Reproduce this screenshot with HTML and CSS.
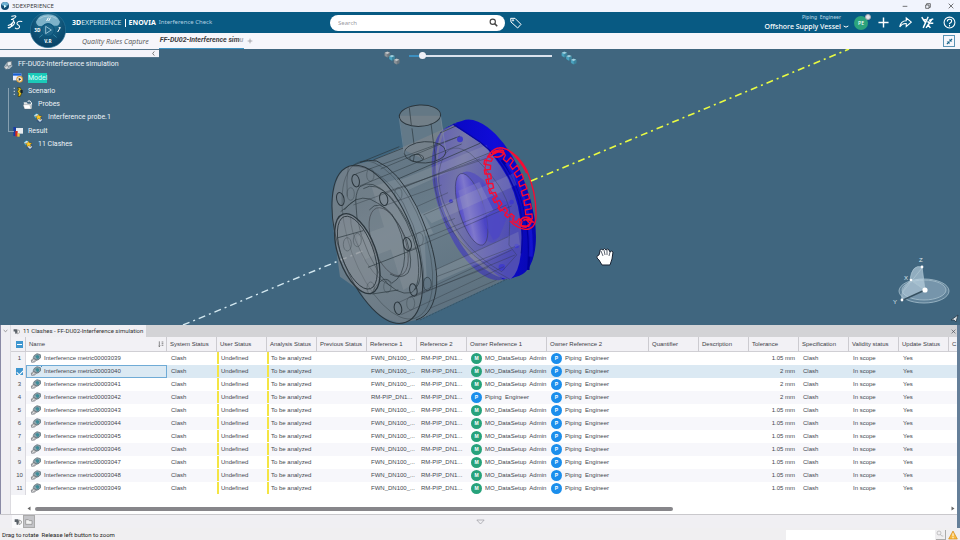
FILE: index.html
```html
<!DOCTYPE html>
<html lang="en">
<head>
<meta charset="utf-8">
<title>3DEXPERIENCE</title>
<link rel="stylesheet" href="styles.css">
</head>
<body>
<svg class="defs" aria-hidden="true">
  <symbol id="metric" viewBox="0 0 33 30">
    <path d="M4 21l13-9 8 6-12 9-8 1z" fill="#e6e8ec" stroke="#63666d" stroke-width="2"/>
    <path d="M12 8l9-6 10 3 1 9-8 7-9-2-5-5z" fill="#8fa3ad" stroke="#4c5d66" stroke-width="2"/>
    <path d="M16 9l6-3 6 3-1 7-6 2z" fill="#3d8c98"/>
    <path d="M7 21l5-3 4 4-5 3z" fill="#fff" stroke="#555" stroke-width="1.5"/>
  </symbol>
  <symbol id="clash" viewBox="0 0 30 30">
    <circle cx="11" cy="9" r="8" fill="#2b83a4"/><path d="M3 8l7-6 8 3-9 9z" fill="#cfe2e8"/>
    <circle cx="20" cy="20" r="9" fill="#35577c"/><path d="M12 19l10-3 6 4-7 7z" fill="#c8d7e6"/>
    <path d="M17 3l3 6 7 0-5 5 2 6-7-3-6 4 1-7-5-4 7-1z" fill="#ffc928" stroke="#4b3a08"/>
  </symbol>
  <symbol id="cube" viewBox="0 0 20 20">
    <path d="M1 5l9-4 9 4v10l-9 5-9-5z" fill="currentColor" stroke="#3a5768" stroke-width="1"/>
    <path d="M2 5l8-3 8 3-8 4z" fill="#fff" fill-opacity=".5"/>
    <path d="M10 9l8-4v9l-8 5z" fill="#123" fill-opacity=".25"/>
  </symbol>
</svg>

<header class="titlebar">
  <svg class="app-icon" viewBox="0 0 24 24"><circle cx="12" cy="12" r="12" fill="#114d73"/><path d="M2 9a10 9 0 0 1 20 0q-10 6-20 0z" fill="#6eb1d2"/><path d="M9 8l8 5-8 5z" fill="#dff"/></svg>
  <span class="app-name">3DEXPERIENCE</span>
  <div class="window-buttons">
    <button aria-label="Minimize"><svg viewBox="0 0 18 18"><path d="M2 10h14"/></svg></button>
    <button aria-label="Restore"><svg viewBox="0 0 18 18"><path d="M2 6h10v10H2zM5 6V2h11v11h-4"/></svg></button>
    <button aria-label="Close"><svg viewBox="0 0 18 18"><path d="M2 2l14 14M16 2L2 16"/></svg></button>
  </div>
</header>

<div class="topbar">
  <div class="brand">
    <svg class="ds-logo" viewBox="0 0 48 46"><path d="M14 4Q26 0 27 4 27 8 13 14 23 13 19 21 13 29 3 32M3 39Q18 35 22 26 24 20 18 21L10 38Q4 42 3 38M45 20Q35 17 31 23 28 28 35 31 41 36 35 41 30 44 25 40" fill="none" stroke="#fff" stroke-width="3.2" stroke-linecap="round" stroke-linejoin="round"/></svg>
    <p class="brand-text"><b>3D</b>EXPERIENCE <span class="brand-bar"></span> <b>ENOVIA</b> <span class="brand-app">Interference Check</span></p>
  </div>
  <div class="search">
    <label class="search-box">
      <input type="search" placeholder="Search" aria-label="Search">
      <svg viewBox="0 0 24 24"><circle cx="10" cy="10" r="7"/><path d="M15 15l7 7" stroke-width="4"/></svg>
    </label>
    <button class="tag" aria-label="Tags"><svg viewBox="0 0 36 34"><path d="M2 3l13 0 18 18-10 11L3 14z"/><circle cx="9" cy="9" r="2"/></svg></button>
  </div>
  <div class="account">
    <div class="who"><span class="who-name">Piping  Engineer</span><button class="space">Offshore Supply Vessel<svg viewBox="0 0 18 10"><path d="M2 2q7 7 14 0"/></svg></button></div>
    <span class="avatar">PE<i></i></span>
    <button class="tool" aria-label="Add"><svg viewBox="0 0 36 36"><path d="M18 4v28M4 18h28" stroke-width="4"/></svg></button>
    <button class="tool" aria-label="Share"><svg viewBox="0 0 36 36"><path d="M2 30Q5 13 20 13V5l14 12-14 12v-8Q9 20 2 30z"/></svg></button>
    <button class="tool" aria-label="Communities"><svg viewBox="0 0 36 36"><path d="M2 3l9 14M20 2L6 33M5 11l9-1M14 33l16-24M18 15l8 7M22 12l12-4M19 24l7 9M27 20l7 0" stroke-width="4"/></svg></button>
    <button class="tool" aria-label="Help"><svg viewBox="0 0 36 36"><circle cx="18" cy="18" r="15"/><path d="M12 15q0-6 6-6t6 5q0 4-6 7v2M18 25v4"/></svg></button>
  </div>
  <svg class="compass" viewBox="0 0 108 108">
    <defs><radialGradient id="cg" cx=".5" cy=".3" r=".75"><stop offset="0" stop-color="#2f86a8"/><stop offset=".55" stop-color="#0f5377"/><stop offset="1" stop-color="#083e62"/></radialGradient></defs>
    <circle cx="54" cy="54" r="53" fill="url(#cg)" stroke="#2a7598" stroke-width="2"/>
    <path d="M18 29Q27 7 54 7T90 29Q87 44 72 41L65 37Q54 30 43 37L35 42Q20 44 18 29z" fill="#7db2c9"/>
    <path d="M28 20Q54 4 80 20" fill="none" stroke="#b8d7e2" stroke-width="2"/>
    <circle cx="54" cy="54" r="19" fill="#1c6488" stroke="#075078" stroke-width="3"/>
    <path d="M47 43l17 11-17 11z" fill="none" stroke="#cbe9f4" stroke-width="2"/>
    <path d="M50 27l5-10M56 27l5-10M83 60l7-12M86 47l6 0" stroke="#fff" stroke-width="3"/>
    <path d="M28 76l10-8M80 76l-10-8" stroke="#3587a8" stroke-width="3"/>
    <text x="13" y="59">3D</text><text x="43" y="92">V.R</text>
  </svg>
</div>

<nav class="tabs">
  <button class="tab">Quality Rules Capture</button>
  <button class="tab active">FF-DU02-Interference sim<span class="fade">u</span></button>
  <button class="tab-add" aria-label="New tab"><svg viewBox="0 0 18 18"><path d="M9 2v14M2 9h14"/></svg></button>
  <button class="collapse" aria-label="Exit full screen"><svg viewBox="0 0 36 36"><path d="M7 18h11v11l-4-4-5 5-3-3 5-5zM29 18H18V7l4 4 5-5 3 3-5 5z"/></svg></button>
</nav>

<main class="viewport">
  <svg class="scene" viewBox="0 49 960 276" preserveAspectRatio="xMidYMid slice" role="img" aria-label="Flange assembly">
    <defs>
      <linearGradient id="rim" x1="0" y1="0" x2="1" y2="1"><stop offset="0" stop-color="#0505b8"/><stop offset=".5" stop-color="#100cd8"/><stop offset=".8" stop-color="#0808b8"/><stop offset="1" stop-color="#00009c"/></linearGradient>
      <linearGradient id="face" x1="0" y1="0" x2="1" y2=".25"><stop offset="0" stop-color="#625fb4"/><stop offset=".35" stop-color="#7476a8"/><stop offset=".75" stop-color="#5d5bb2"/><stop offset="1" stop-color="#4e4cb4"/></linearGradient>
      <linearGradient id="bore" x1="0" y1="0" x2="1" y2=".3"><stop offset="0" stop-color="#433bc8"/><stop offset=".5" stop-color="#7f78cc"/><stop offset="1" stop-color="#4942c4"/></linearGradient>
      <linearGradient id="metal" x1="0" y1="0" x2=".35" y2="1"><stop offset="0" stop-color="#858a90"/><stop offset=".4" stop-color="#82858a"/><stop offset=".6" stop-color="#8e9296"/><stop offset="1" stop-color="#787d82"/></linearGradient>
    </defs>
    <path d="M183 325L365 250" stroke="#d3e8f0" stroke-width="1.4" stroke-dasharray="7 4 2 4" fill="none"/>
    <g transform="translate(320 90) scale(.3333)">
      <path d="M238 77L253 180 315 210 377 180 362 77z" fill="#7b868e" fill-opacity=".6"/>
      <g fill="url(#rim)">
        <ellipse cx="470" cy="338" rx="113" ry="244" transform="rotate(-20 470 338)"/>
        <ellipse cx="483" cy="334" rx="113" ry="246" transform="rotate(-20 483 334)"/>
        <ellipse cx="496" cy="330" rx="113" ry="248" transform="rotate(-20 496 330)"/>
        <ellipse cx="512" cy="325" rx="113" ry="248" transform="rotate(-20 512 325)"/>
      </g>
      <path d="M365 125L400 106 480 156Q522 192 560 258 603 340 605 440 606 540 572 568 522 568 450 500 380 410 357 310 336 190 365 125z" fill="url(#face)"/>
      <path d="M545 210Q640 330 625 540" fill="none" stroke="#00009c" stroke-width="7"/>
      <path d="M560 220Q640 350 632 500" fill="none" stroke="#2a28ff" stroke-width="12" opacity=".35"/>
      <path d="M410 280Q425 215 490 270 545 330 540 430 525 480 490 440z" fill="#514bc0" opacity=".7"/>
      <ellipse cx="455" cy="358" rx="38" ry="112" transform="rotate(-17 455 358)" fill="url(#bore)" stroke="#40406d" stroke-width="2"/>
      <path d="M485 275L545 330 578 340 538 440 520 450 493 400z" fill="#4b45c6" opacity=".65"/>
      <path d="M415 302L478 276 520 360 491 382 440 405z" fill="#8580c8" opacity=".45"/>
      <g fill="#403cc8"><circle cx="420" cy="148" r="9"/><circle cx="575" cy="336" r="7"/><circle cx="393" cy="334" r="6"/><circle cx="590" cy="468" r="7"/><circle cx="546" cy="532" r="10"/></g>
      <path d="M90 228L160 211 410 100 370 130Q338 220 364 330 408 470 552 570L300 688 250 698Q170 695 120 602L60 560 38 400Q30 250 90 228z" fill="url(#metal)" opacity=".55"/>
      <g fill="#b4b8bc" opacity=".2">
        <path d="M310 370L580 250 590 285 335 400zM345 540L595 425 600 465 350 575zM240 270L500 165 510 190 265 300zM110 440L310 370 340 430 130 510zM155 290L240 265 310 380 320 560 250 600z"/>
      </g>
      <g fill="none" stroke="#2b363d" stroke-width="2">
        <ellipse cx="172" cy="463" rx="113" ry="249" transform="rotate(-20 172 463)" fill="#8c8d92" fill-opacity=".3" stroke-width="3"/>
        <ellipse cx="202" cy="450" rx="113" ry="249" transform="rotate(-20 202 450)" opacity=".5"/>
        <path d="M120 217Q145 207 170 213 235 240 290 350 355 490 350 585 342 675 288 690" stroke-width="3"/>
        <path d="M120 290Q155 265 205 315 270 390 292 490 305 585 275 608 230 620 180 555 105 430 107 330 110 300 120 290z"/>
        <path d="M130 296Q165 272 214 323 277 400 299 490 312 570 284 600"/>
        <path d="M73 360Q105 315 150 327 220 355 260 450 282 520 264 549 242 570 210 552"/>
        <ellipse cx="206" cy="455" rx="49" ry="107" transform="rotate(-20 206 455)" stroke="#454b53"/>
        <path d="M148 360Q175 325 215 372 253 430 254 500 252 560 215 580 190 545 155 610"/>
        <path d="M92 380Q90 420 120 480 155 560 210 587" opacity=".7"/>
        <path d="M85 230Q78 270 82 320M98 229Q180 226 250 340 318 470 312 610" opacity=".55"/>
        <ellipse cx="112" cy="491" rx="56" ry="126" transform="rotate(-20 112 491)" fill="#94999e" fill-opacity=".35" stroke-width="4"/>
        <ellipse cx="112" cy="488" rx="48" ry="115" transform="rotate(-20 112 488)" stroke-width="2.5"/>
        <path d="M51 444L130 422M62 365L110 327M157 612L235 600M144 532L290 475"/>
        <g stroke-width="3">
          <ellipse cx="107" cy="272" rx="11" ry="19" transform="rotate(-12 107 272)"/><ellipse cx="61" cy="327" rx="11" ry="20" transform="rotate(-12 61 327)"/><ellipse cx="191" cy="327" rx="12" ry="20" transform="rotate(-12 191 327)"/><ellipse cx="262" cy="462" rx="12" ry="20" transform="rotate(-12 262 462)"/><ellipse cx="280" cy="600" rx="11" ry="19" transform="rotate(-12 280 600)"/><ellipse cx="234" cy="655" rx="11" ry="19" transform="rotate(-12 234 655)"/>
        </g>
        <g opacity=".5"><ellipse cx="82" cy="463" rx="12" ry="20"/><ellipse cx="112" cy="450" rx="12" ry="20"/><ellipse cx="151" cy="255" rx="11" ry="19"/><ellipse cx="92" cy="312" rx="11" ry="19"/><ellipse cx="235" cy="312" rx="11" ry="19"/><ellipse cx="298" cy="448" rx="12" ry="20"/><ellipse cx="272" cy="640" rx="12" ry="20"/><ellipse cx="152" cy="594" rx="11" ry="18"/><ellipse cx="202" cy="590" rx="11" ry="18"/></g>
        <ellipse cx="322" cy="582" rx="12" ry="20"/>
        <path d="M95 228L238 170M160 210L250 174M360 129L410 107M232 268L480 160"/>
        <path d="M107 252L410 142M114 290L425 162M182 237L420 138M252 292L510 188" stroke-width="2" opacity=".75"/>
        <path d="M100 345L480 207M191 308L500 205M196 346L365 285M290 350L384 308M310 375L400 335M262 442L405 385M265 482L575 348M325 440L560 345M345 540L565 440M350 560L585 470M288 618L585 495M235 638L575 480M244 674L552 530M330 655L530 570M270 622L505 532" opacity=".55"/>
        <path d="M300 690L560 568" stroke-dasharray="2 3"/>
        <path d="M345 195Q330 300 380 400 450 510 570 568M357 245Q375 140 450 190 560 290 570 370L567 465 590 495 545 545Q430 480 385 370 350 300 357 245z" opacity=".5"/>
        <ellipse cx="300" cy="77" rx="62" ry="32" transform="rotate(-3 300 77)" fill="#7d8489" fill-opacity=".6" stroke-width="3"/>
        <ellipse cx="315" cy="187" rx="62" ry="32" transform="rotate(-3 315 187)" stroke-width="2.5"/>
        <ellipse cx="290" cy="204" rx="21" ry="11"/><path d="M280 216L283 194 296 192 308 208"/>
        <path d="M268 53L274 105M333 100L340 155M340 155L348 212M276 115L282 162"/>
        <path d="M238 85L253 190M362 80L377 180" stroke="#8798a4" stroke-width="1.5"/>
      </g>
      <path d="M400 102L480 156Q555 210 595 330 614 410 604 490" fill="none" stroke="#0808a2" stroke-width="4"/>
      <g fill="none" stroke="#fa0a32" stroke-width="4" stroke-linejoin="round">
        <path d="M530 188L505 200 518 206 514 214 494 210 492 222 512 226 511 238 493 240 495 252 512 252 514 266 498 269 501 281 518 280 521 294 506 299 510 311 526 307 531 319 518 327 524 338 539 331 546 342 534 353 542 363 555 352 563 362 554 375 563 383 574 371 583 379 577 393 588 399 597 386 606 394 603 408 618 412 632 400"/>
        <path d="M524 189L501 204 495 234 506 270 504 289 522 318 541 357 571 377 597 405 628 410" stroke-width="3"/>
        <path d="M530 188L548 180 556 196 550 208 560 216 572 202 580 212 570 226 578 238 592 226 598 238 583 250 590 262 606 252 611 266 596 276 600 290 616 282 621 296 604 304 608 318 625 312 629 326 612 332 614 346 632 342 634 356 616 360 617 374 636 372 637 386 620 390 632 402"/>
        <path d="M502 202Q520 170 548 174 590 184 620 240 650 310 648 380 646 420 615 418 590 414 570 393M510 190Q530 164 562 179 598 202 620 250"/>
        <path d="M512 198Q530 176 552 190 542 205 522 200M516 189Q536 174 552 184M603 388Q620 374 635 390 632 412 608 410 592 402 603 388M610 392Q622 382 642 398" stroke-width="5"/>
      </g>
    </g>
    <path d="M531 181L849 49" stroke="#e9fb42" stroke-width="1.6" stroke-dasharray="7 4 2 4" fill="none"/>
    <g transform="translate(596 247)">
      <path d="M3 8L1 9Q0 11 3 13L6 18H14L16 12 17 5Q16 3 14 5L13 3Q12 1 10 3 8 0 7 3 4 1 4 4z" fill="#fff" stroke="#182333" stroke-width="1"/>
      <path d="M5 4l2 5M8 3l1 5M11 3v5M14 5l-1 4" stroke="#182333" stroke-width=".7"/>
    </g>
    <g fill="#bdd4e2" fill-opacity=".25" stroke="#a7c0ce" stroke-width=".8">
      <ellipse cx="924" cy="291" rx="25" ry="12"/><ellipse cx="924" cy="290" rx="22" ry="10"/>
      <path d="M925 290L902 300Q900 289 911 280z" fill-opacity=".5"/><path d="M925 290L910 280Q912 264 922 267z" fill-opacity=".65"/><path d="M902 293L922 268M925 290L911 280" stroke-width="1"/>
      <path d="M925 290L903 300" stroke="#365060" stroke-width="1.4"/>
    </g>
    <g fill="#fff"><circle cx="925" cy="290" r="2.6"/><circle cx="922" cy="267" r="1.4"/><circle cx="911" cy="280" r="1.3"/><circle cx="902" cy="300" r="1.4"/></g>
    <g class="axis"><text x="919" y="262">Z</text><text x="904" y="280">X</text><text x="893" y="304">Y</text></g>
    <path d="M951 320l7-5-2 7-2-2z" fill="#d9e0e4" stroke="#263948" stroke-width=".8"/>
  </svg>

  <aside class="tree-pane">
    <div class="tree-head"><button aria-label="Collapse tree"><svg viewBox="0 0 12 12"><path d="M8 1L4 6l4 5"/></svg></button></div>
    <ul class="tree">
      <li><span class="node"><svg viewBox="0 0 30 30"><path d="M3 20l8-12 14-5 3 16-9 8-12 1z" fill="#aebbc5"/><path d="M12 6l13-2v12l-12 3z" fill="#e4eaed" stroke="#55646e" stroke-width="2"/><path d="M4 22l9-5 4 5-7 6z" fill="#d9dadb" stroke="#4a5963"/></svg>FF-DU02-Interference simulation</span>
        <ul class="branch">
          <li><span class="node"><svg viewBox="0 0 30 30"><path d="M0 1h25v21H0z" fill="#e6ecff"/><path d="M0 1h25v7H0z" fill="#195fd1"/><circle cx="20" cy="19" r="10" fill="#d99b38"/><circle cx="20" cy="19" r="7" fill="#fff0d0"/><path d="M17 14l8 5-8 5z" fill="#333"/></svg><mark>Model</mark></span></li>
          <li><span class="node"><svg viewBox="0 0 30 30"><path d="M2 2h4v4H2zM2 11h4v4H2zM2 20h4v4H2z" fill="#b8c3cb"/><path d="M14 2h8l3 7-5 4 6 5-4 10h-7l2-9-4-6 4-5z" fill="#e9c51b" stroke="#37340b" stroke-width="2"/><path d="M23 9h6v9h-6z" fill="#152127"/></svg>Scenario</span>
            <ul>
              <li><span class="node"><svg viewBox="0 0 30 30"><path d="M2 7h9l3 4h12v15H5z" fill="#dee2e4"/><path d="M0 14h20l5 13H5z" fill="#fff" stroke="#5a646a"/><path d="M14 4q10-5 12 9" fill="none" stroke="#fff" stroke-width="3"/></svg>Probes</span>
                <ul><li><span class="node"><svg><use href="#clash"/></svg>Interference probe.1</span></li></ul>
              </li>
            </ul>
          </li>
          <li><span class="node"><svg viewBox="0 0 30 30"><path d="M9 3h21v17H9z" fill="#e8ebef"/><path d="M1 0h8v27H1z" fill="#1a3da4"/><path d="M7 12h7v16H7z" fill="#d62a1e"/><path d="M13 19h7v10h-7z" fill="#f4c342"/></svg>Result</span>
            <ul><li><span class="node"><svg><use href="#clash"/></svg>11 Clashes</span></li></ul>
          </li>
        </ul>
      </li>
    </ul>
  </aside>

  <div class="zoom-bar">
    <svg class="cubes mixed" viewBox="0 0 48 42"><use href="#cube" x="0" y="0" width="20" height="20"/><use class="mid" href="#cube" x="14" y="10" width="20" height="20"/><use href="#cube" x="28" y="21" width="20" height="20"/></svg>
    <input type="range" min="0" max="100" value="8" aria-label="Level of detail">
    <svg class="cubes" viewBox="0 0 48 42"><use href="#cube" x="0" y="0" width="20" height="20"/><use href="#cube" x="14" y="10" width="20" height="20"/><use href="#cube" x="28" y="21" width="20" height="20"/></svg>
  </div>
</main>

<section class="panel">
  <div class="panel-body">
    <div class="gutter"><button aria-label="Collapse panel"><svg viewBox="0 0 16 10"><path d="M2 2l6 5 6-5"/></svg></button></div>
    <div class="panel-main">
      <div class="panel-tabs">
        <button class="panel-tab"><svg viewBox="0 0 24 24"><path d="M2 4h11l2 7-3 9H8L7 12H2z" fill="#596067" stroke="none"/><path d="M15 6l7 3v7l-7 4z" fill="#fff" stroke="#777"/></svg>11 Clashes - FF-DU02-Interference simulation</button>
        <button class="panel-close" aria-label="Close"><svg viewBox="0 0 16 16"><path d="M2 2l12 12M14 2L2 14"/></svg></button>
      </div>
      <div class="grid">
        <table>
          <colgroup><col class="c-gap"><col class="c-num"><col class="c-name"><col class="c-std"><col class="c-std"><col class="c-std"><col class="c-std"><col class="c-std"><col class="c-std"><col class="c-own1"><col class="c-own2"><col class="c-std"><col class="c-std"><col class="c-std"><col class="c-std"><col class="c-std"><col class="c-std"><col></colgroup>
          <thead><tr><th class="gap"></th><th class="num"><input type="checkbox" class="some" aria-label="Select all"></th><th><div class="sortable">Name<svg viewBox="0 0 18 18"><path d="M4 1v16M1 14l3 3 3-3M11 3h5M11 8h5M11 13h5"/></svg></div></th><th>System Status</th><th>User Status</th><th>Analysis Status</th><th>Previous Status</th><th>Reference 1</th><th>Reference 2</th><th>Owner Reference 1</th><th>Owner Reference 2</th><th>Quantifier</th><th>Description</th><th>Tolerance</th><th>Specification</th><th>Validity status</th><th>Update Status</th><th>C</th></tr></thead>
          <tbody>
            <tr><td class="gap"></td><td class="num">1</td><td class="name"><svg><use href="#metric"/></svg>Interference metric00003039</td><td>Clash</td><td class="flag">Undefined</td><td class="flag">To be analyzed</td><td></td><td>FWN_DN100_...</td><td>RM-PIP_DN1...</td><td class="own"><i class="m">M</i>MO_DataSetup  Admin</td><td class="own"><i>P</i>Piping  Engineer</td><td></td><td></td><td class="tol">1.05 mm</td><td>Clash</td><td>In scope</td><td>Yes</td><td></td></tr>
            <tr class="selected"><td class="gap"></td><td class="num"><input type="checkbox" checked aria-label="Select row 2"></td><td class="name"><svg><use href="#metric"/></svg>Interference metric00003040</td><td>Clash</td><td class="flag">Undefined</td><td class="flag">To be analyzed</td><td></td><td>FWN_DN100_...</td><td>RM-PIP_DN1...</td><td class="own"><i class="m">M</i>MO_DataSetup  Admin</td><td class="own"><i>P</i>Piping  Engineer</td><td></td><td></td><td class="tol">2 mm</td><td>Clash</td><td>In scope</td><td>Yes</td><td></td></tr>
            <tr><td class="gap"></td><td class="num">3</td><td class="name"><svg><use href="#metric"/></svg>Interference metric00003041</td><td>Clash</td><td class="flag">Undefined</td><td class="flag">To be analyzed</td><td></td><td>FWN_DN100_...</td><td>RM-PIP_DN1...</td><td class="own"><i class="m">M</i>MO_DataSetup  Admin</td><td class="own"><i>P</i>Piping  Engineer</td><td></td><td></td><td class="tol">2 mm</td><td>Clash</td><td>In scope</td><td>Yes</td><td></td></tr>
            <tr><td class="gap"></td><td class="num">4</td><td class="name"><svg><use href="#metric"/></svg>Interference metric00003042</td><td>Clash</td><td class="flag">Undefined</td><td class="flag">To be analyzed</td><td></td><td>RM-PIP_DN1...</td><td>RM-PIP_DN1...</td><td class="own"><i>P</i>Piping  Engineer</td><td class="own"><i>P</i>Piping  Engineer</td><td></td><td></td><td class="tol">2 mm</td><td>Clash</td><td>In scope</td><td>Yes</td><td></td></tr>
            <tr><td class="gap"></td><td class="num">5</td><td class="name"><svg><use href="#metric"/></svg>Interference metric00003043</td><td>Clash</td><td class="flag">Undefined</td><td class="flag">To be analyzed</td><td></td><td>FWN_DN100_...</td><td>RM-PIP_DN1...</td><td class="own"><i class="m">M</i>MO_DataSetup  Admin</td><td class="own"><i>P</i>Piping  Engineer</td><td></td><td></td><td class="tol">1.05 mm</td><td>Clash</td><td>In scope</td><td>Yes</td><td></td></tr>
            <tr><td class="gap"></td><td class="num">6</td><td class="name"><svg><use href="#metric"/></svg>Interference metric00003044</td><td>Clash</td><td class="flag">Undefined</td><td class="flag">To be analyzed</td><td></td><td>FWN_DN100_...</td><td>RM-PIP_DN1...</td><td class="own"><i class="m">M</i>MO_DataSetup  Admin</td><td class="own"><i>P</i>Piping  Engineer</td><td></td><td></td><td class="tol">1.05 mm</td><td>Clash</td><td>In scope</td><td>Yes</td><td></td></tr>
            <tr><td class="gap"></td><td class="num">7</td><td class="name"><svg><use href="#metric"/></svg>Interference metric00003045</td><td>Clash</td><td class="flag">Undefined</td><td class="flag">To be analyzed</td><td></td><td>FWN_DN100_...</td><td>RM-PIP_DN1...</td><td class="own"><i class="m">M</i>MO_DataSetup  Admin</td><td class="own"><i>P</i>Piping  Engineer</td><td></td><td></td><td class="tol">1.05 mm</td><td>Clash</td><td>In scope</td><td>Yes</td><td></td></tr>
            <tr><td class="gap"></td><td class="num">8</td><td class="name"><svg><use href="#metric"/></svg>Interference metric00003046</td><td>Clash</td><td class="flag">Undefined</td><td class="flag">To be analyzed</td><td></td><td>FWN_DN100_...</td><td>RM-PIP_DN1...</td><td class="own"><i class="m">M</i>MO_DataSetup  Admin</td><td class="own"><i>P</i>Piping  Engineer</td><td></td><td></td><td class="tol">1.05 mm</td><td>Clash</td><td>In scope</td><td>Yes</td><td></td></tr>
            <tr><td class="gap"></td><td class="num">9</td><td class="name"><svg><use href="#metric"/></svg>Interference metric00003047</td><td>Clash</td><td class="flag">Undefined</td><td class="flag">To be analyzed</td><td></td><td>FWN_DN100_...</td><td>RM-PIP_DN1...</td><td class="own"><i class="m">M</i>MO_DataSetup  Admin</td><td class="own"><i>P</i>Piping  Engineer</td><td></td><td></td><td class="tol">1.05 mm</td><td>Clash</td><td>In scope</td><td>Yes</td><td></td></tr>
            <tr><td class="gap"></td><td class="num">10</td><td class="name"><svg><use href="#metric"/></svg>Interference metric00003048</td><td>Clash</td><td class="flag">Undefined</td><td class="flag">To be analyzed</td><td></td><td>FWN_DN100_...</td><td>RM-PIP_DN1...</td><td class="own"><i class="m">M</i>MO_DataSetup  Admin</td><td class="own"><i>P</i>Piping  Engineer</td><td></td><td></td><td class="tol">1.05 mm</td><td>Clash</td><td>In scope</td><td>Yes</td><td></td></tr>
            <tr><td class="gap"></td><td class="num">11</td><td class="name"><svg><use href="#metric"/></svg>Interference metric00003049</td><td>Clash</td><td class="flag">Undefined</td><td class="flag">To be analyzed</td><td></td><td>FWN_DN100_...</td><td>RM-PIP_DN1...</td><td class="own"><i class="m">M</i>MO_DataSetup  Admin</td><td class="own"><i>P</i>Piping  Engineer</td><td></td><td></td><td class="tol">1.05 mm</td><td>Clash</td><td>In scope</td><td>Yes</td><td></td></tr>
          </tbody>
        </table>
        <div class="scroll">
          <svg viewBox="0 0 8 10"><path d="M7 1v8L1 5z"/></svg>
          <div class="track"><div class="thumb"></div></div>
          <svg viewBox="0 0 8 10"><path d="M1 1v8l6-4z"/></svg>
        </div>
      </div>
    </div>
  </div>
  <div class="views">
    <button class="view on" aria-label="Clash view"><svg viewBox="0 0 24 24"><path d="M2 4h11l2 7-3 9H8L7 12H2z" fill="#596067" stroke="none"/><path d="M15 6l7 3v7l-7 4z" fill="#fff" stroke="#777" stroke-width="2"/></svg></button>
    <button class="view" aria-label="Folder view"><svg viewBox="0 0 24 24"><path d="M2 19V5h8l3 3h8v11z" fill="#f2f2f2" stroke="#888" stroke-width="2"/></svg></button>
    <button class="drawer" aria-label="Toggle drawer"><svg viewBox="0 0 26 18"><path d="M2 3h22L13 15z"/></svg></button>
  </div>
</section>

<footer class="status">
  <span>Drag to rotate  Release left button to zoom</span>
  <input type="text" class="command" aria-label="Command">
  <button class="find" aria-label="Find"><svg viewBox="0 0 24 24"><circle cx="9" cy="9" r="6"/><path d="M13 13l4 5h5"/></svg></button>
  <svg class="warn" viewBox="0 0 30 28"><path d="M15 2l13 24H2z" fill="#f8b93c" stroke="#d18a18" stroke-width="2"/><path d="M15 9v9M15 20v4" stroke="#fff" stroke-width="3"/></svg>
</footer>
</body>
</html>
```
FILE: styles.css
```css
* { box-sizing: border-box; }
body {
  margin: 0;
  min-height: 100vh;
  display: flex;
  flex-direction: column;
  overflow-x: hidden;
  background: #f0eff3;
  color: #444850;
  font: 6px/13px "Liberation Sans", Arial, sans-serif;
}
button { border: 0; padding: 0; margin: 0; background: none; font: inherit; color: inherit; display: flex; align-items: center; }
svg { display: block; flex: none; }
button svg { fill: none; stroke: currentColor; stroke-width: 2; }
.defs { position: absolute; width: 0; height: 0; }

.titlebar { height: 12px; display: flex; align-items: center; gap: 3px; padding: 0 6px 0 1px; background: #f1f4fd; }
.app-icon { width: 8px; height: 8px; }
.app-name { font: 6px/12px "Open Sans", sans-serif; color: #333; }
.window-buttons { margin-left: auto; display: flex; gap: 17px; color: #333; }
.window-buttons svg { width: 6px; height: 6px; }

.topbar {
  position: relative;
  height: 21px;
  display: grid;
  grid-template-columns: 330px 200px 1fr;
  align-items: center;
  background: #085a83;
  color: #fff;
  font-family: "Noto Sans", sans-serif;
}
.brand { display: flex; align-items: center; gap: 49px; padding-left: 7px; }
.ds-logo { width: 16px; height: 15px; }
.brand-text { margin: 0; display: flex; align-items: center; font-size: 7px; white-space: nowrap; color: #d7e9f2; }
.brand-text b { color: #fff; }
.brand-bar { width: 1px; height: 8px; margin: 0 3px; background: #fff; }
.brand-app { margin-left: 3px; font-size: 6px; color: #b4d2e2; }
.compass { position: absolute; left: 30px; top: 0; width: 36px; height: 36px; z-index: 2; fill: #fff; font: bold 14px "Noto Sans", sans-serif; }
.search { display: flex; align-items: center; gap: 5px; }
.search-box { display: flex; align-items: center; width: 175px; height: 16px; padding: 0 7px 0 8px; border-radius: 8px; background: #fff; }
.search-box input { flex: 1; min-width: 0; border: 0; padding: 0; outline: 0; background: none; font: 6px/12px "Noto Sans", sans-serif; color: #555; }
.search-box input::placeholder { color: #9a9a9f; }
.search-box svg { width: 9px; height: 9px; fill: none; stroke: #444; stroke-width: 3; }
.tag svg { width: 12px; height: 12px; stroke-width: 3; }
.account { display: flex; align-items: center; justify-content: flex-end; gap: 9px; padding-right: 4px; }
.who { display: flex; flex-direction: column; align-items: flex-end; margin-right: -4px; font: 500 7px/10px "Noto Sans", sans-serif; }
.who-name { padding-right: 8px; font-size: 5px; line-height: 9px; white-space: pre; color: #b4d2e2; }
.space { gap: 2px; white-space: nowrap; }
.space svg { width: 6px; height: 4px; stroke-width: 3; }
.avatar { position: relative; width: 14px; height: 14px; border-radius: 50%; background: #2ba37c; font: 500 5px/14px "Noto Sans", sans-serif; text-align: center; }
.avatar i { position: absolute; right: -3px; top: -2px; width: 6px; height: 6px; border: 1px solid #a8a8b0; border-radius: 50%; background: #e6e6ea; }
.tool svg { width: 13px; height: 13px; stroke-width: 3; }

.tabs { height: 16px; display: flex; align-items: stretch; padding: 0 5px 0 82px; background: #f6f6fb; font: italic 7px/15px "Open Sans", sans-serif; }
.tab { margin-right: 10px; white-space: nowrap; color: #555; }
.tab.active { margin-right: 3px; padding: 0 1px; font-family: Roboto, sans-serif; font-weight: bold; color: #3d3d42; border-bottom: 1px solid #3f93c3; }
.fade { color: #aaaab0; }
.tab-add { color: #8a8a90; }
.tab-add svg { width: 6px; height: 6px; }
.collapse { align-self: center; margin-left: auto; border: 1px solid #5a93b5; width: 12px; height: 12px; justify-content: center; }
.collapse svg { width: 9px; height: 9px; fill: #0b5c84; stroke: none; }

.viewport { position: relative; flex: 1; min-height: 276px; background: #40667f; overflow: hidden; }
.scene { position: absolute; inset: 0; width: 100%; height: 100%; }
.axis { fill: #dce7ee; font: 6px "Liberation Sans", sans-serif; }
.tree-pane { position: relative; width: 159px; color: #edf3f7; font: 7px/13px Roboto, sans-serif; }
.tree-head { height: 9px; display: flex; justify-content: flex-end; padding-right: 3px; border-top: 1px solid #55758b; border-bottom: 1px solid #55758b; background: #f4f3f9; color: #666; }
.tree-head svg { width: 5px; height: 5px; }
.tree, .tree ul { list-style: none; margin: 0; padding: 0; }
.tree { padding-left: 3px; }
.tree ul { padding-left: 10px; }
.tree .branch { position: relative; display: flex; flex-direction: column; gap: 1px; }
.branch::before { content: ""; position: absolute; left: 5px; top: 17px; width: 5px; height: 43px; border: solid #87a0b0; border-width: 0 0 1px 1px; }
.node { display: flex; align-items: center; gap: 5px; height: 13px; white-space: nowrap; }
.node svg { width: 10px; height: 10px; }
mark { line-height: 10px; background: #1bcab8; color: #d9fffa; }
.zoom-bar { position: absolute; left: 0; right: 0; top: 2px; display: flex; justify-content: center; align-items: flex-start; gap: 9px; pointer-events: none; }
.cubes { width: 16px; height: 14px; color: #4aa3c0; }
.cubes.mixed { color: #8d949a; }
.mixed .mid { color: #4aa3c0; }
.zoom-bar input { width: 143px; height: 7px; margin: 1px 0 0; appearance: none; background: linear-gradient(90deg, #3c8fc0 10%, #dce3ed 10%) center / 100% 2px no-repeat; pointer-events: auto; }
.zoom-bar input::-webkit-slider-thumb { appearance: none; width: 7px; height: 7px; border-radius: 50%; background: #f0f1f7; }

.panel { border-right: 3px solid #657f99; }
.panel-body { display: flex; border-bottom: 1px solid #c9c8cc; }
.gutter { width: 11px; padding: 4px 2px; border-left: 1px solid #8a8aa5; border-right: 1px solid #dcdbe0; color: #666; }
.gutter svg { width: 5px; height: 4px; }
.panel-main { flex: 1; min-width: 0; }
.panel-tabs { display: flex; justify-content: space-between; height: 12px; padding-right: 1px; background: #d3d3d6; }
.panel-tab { gap: 3px; padding: 0 3px 0 2px; background: #f0eff3; color: #333; white-space: nowrap; font: 6px/12px Roboto, sans-serif; }
.panel-tab svg { width: 7px; height: 7px; }
.panel-close svg { width: 5px; height: 5px; }
.grid { background: #fff; }
table { width: 100%; table-layout: fixed; border-collapse: separate; border-spacing: 0; }
.c-gap { width: 3px; }
.c-num { width: 12px; }
.c-name { width: 141px; }
.c-std { width: 50px; }
.c-own1 { width: 80px; }
.c-own2 { width: 102px; }
th, td { height: 13px; padding: 0 0 0 4px; overflow: hidden; white-space: pre; text-align: left; font-weight: normal; }
th { height: 15px; padding-left: 3px; background: #f2f1f5; border-right: 1px solid #cccbd0; border-bottom: 1px solid #d0cfd4; color: #3c4047; }
th:last-child { border-right: 0; }
tbody tr:nth-child(even) td { background-color: #f7f7fb; }
tbody tr.selected td { background-color: #dbe9f3; }
tbody .gap.gap, tbody .num.num, .selected .num.num { background-color: #f2f2f6; }
.gap.gap { padding: 0; border-right: 0; }
.num { padding: 0; text-align: center; }
td.num { border-right: 1px solid #dad9df; }
.num input { display: block; margin: 0 auto; width: 7px; height: 7px; appearance: none; background: #3f96cf; position: relative; }
.num input:checked::before { content: ""; position: absolute; left: 1px; top: 2px; width: 5px; height: 3px; border: solid #fff; border-width: 0 0 1px 1px; transform: rotate(-45deg); }
.num .some::before { content: ""; position: absolute; left: 1px; top: 3px; width: 5px; height: 1px; background: #fff; }
.sortable { display: flex; align-items: center; justify-content: space-between; padding-right: 2px; }
.sortable svg { width: 6px; height: 6px; fill: none; stroke: #555; stroke-width: 2; }
.name svg, .own i { display: inline-block; vertical-align: middle; }
.name svg { width: 11px; height: 10px; margin-right: 3px; }
.selected .name { box-shadow: inset 0 0 0 1px #6fabd6; background-image: linear-gradient(135deg, #3b8dc4 50%, transparent 50%); background-position: 15px 0; background-size: 3px 3px; background-repeat: no-repeat; }
.flag { background: linear-gradient(#f4e544, #f4e544) 0 0 / 2px 12px no-repeat; }
.own i { width: 11px; height: 11px; margin-right: 3px; border-radius: 50%; background: #1b8eec; color: #fff; font: bold 5px/11px "Liberation Sans", sans-serif; text-align: center; }
.own .m { background: #27a27b; }
.tol { padding-right: 4px; text-align: right; }
.scroll { display: flex; align-items: center; gap: 4px; height: 19px; padding: 8px 2px 0 16px; }
.scroll svg { width: 4px; height: 5px; fill: #666; }
.track { flex: 1; }
.thumb { width: 70%; height: 4px; border-radius: 2px; background: #87868a; }
.views { display: grid; grid-template-columns: 11px 12px 1fr; height: 13px; padding-left: 12px; }
.view { justify-content: center; background: #c4c4c8; border: 1px solid #aaa; }
.view.on { background: #fafafc; border: 0; }
.view svg { width: 8px; height: 8px; }
.drawer { justify-content: center; padding-right: 32px; color: #98989e; }
.drawer svg { width: 9px; height: 6px; }
.status { display: flex; align-items: center; height: 13px; padding: 0 2px; background: #f0eff1; color: #222; font: 6px/13px Roboto, sans-serif; white-space: pre; }
.command { width: 149px; height: 10px; margin: 0 1px 0 auto; padding: 0; border: 0; background: #fff; }
.find { width: 10px; height: 10px; margin-right: 2px; border: solid #aaa; border-width: 0 1px 1px 0; color: #aaa; }
.find svg { width: 8px; height: 8px; }
.warn { width: 10px; height: 10px; }
```
